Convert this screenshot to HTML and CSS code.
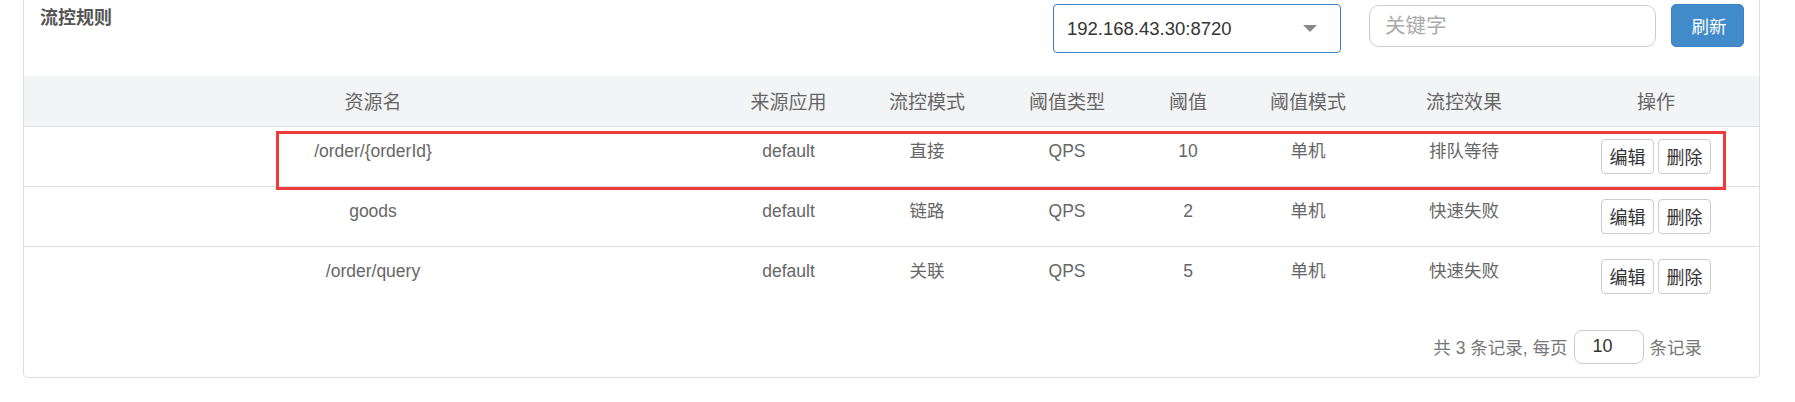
FILE: index.html
```html
<!DOCTYPE html>
<html lang="zh-CN">

<head>
    <meta charset="UTF-8">
    <meta name="viewport" content="width=device-width, initial-scale=1.0">
    <title>流控规则</title>
    <link rel="stylesheet" href="styles.css">
</head>

<body>
    <div class="page">
        <div class="card">
            <div class="toolbar">
                <h3 class="card-title">流控规则</h3>
                <div class="tools">
                    <div class="select-box">
                        <span>192.168.43.30:8720</span>
                        <i class="caret"></i>
                    </div>
                    <input type="text" class="search" placeholder="关键字">
                    <button class="btn-refresh">刷新</button>
                </div>
            </div>

            <table class="rules">
                <colgroup>
                    <col style="width: 698px;">
                    <col style="width: 133px;">
                    <col style="width: 144px;">
                    <col style="width: 136px;">
                    <col style="width: 106px;">
                    <col style="width: 134px;">
                    <col style="width: 178px;">
                    <col style="width: 206px;">
                </colgroup>
                <thead>
                    <tr>
                        <th>资源名</th>
                        <th>来源应用</th>
                        <th>流控模式</th>
                        <th>阈值类型</th>
                        <th>阈值</th>
                        <th>阈值模式</th>
                        <th>流控效果</th>
                        <th>操作</th>
                    </tr>
                </thead>
                <tbody>
                    <tr>
                        <td>/order/{orderId}</td>
                        <td>default</td>
                        <td>直接</td>
                        <td>QPS</td>
                        <td>10</td>
                        <td>单机</td>
                        <td>排队等待</td>
                        <td class="ops"><div><button>编辑</button><button>删除</button></div></td>
                    </tr>
                    <tr>
                        <td>goods</td>
                        <td>default</td>
                        <td>链路</td>
                        <td>QPS</td>
                        <td>2</td>
                        <td>单机</td>
                        <td>快速失败</td>
                        <td class="ops"><div><button>编辑</button><button>删除</button></div></td>
                    </tr>
                    <tr>
                        <td>/order/query</td>
                        <td>default</td>
                        <td>关联</td>
                        <td>QPS</td>
                        <td>5</td>
                        <td>单机</td>
                        <td>快速失败</td>
                        <td class="ops"><div><button>编辑</button><button>删除</button></div></td>
                    </tr>
                </tbody>
            </table>

            <div class="pager">
                <span>共 3 条记录, 每页</span>
                <input type="text" class="page-size" value="10">
                <span>条记录</span>
            </div>
        </div>

        <!-- 标注框 -->
        <div class="mark"></div>
    </div>
</body>

</html>
```

FILE: styles.css
```css
* {
    box-sizing: border-box;
}

body {
    margin: 0;
    background: #fff;
    font-family: "Liberation Sans", "Noto Sans CJK SC", sans-serif;
    color: #666;
}

.page {
    position: relative;
    padding-left: 23px;
}

.card {
    width: 1737px;
    border: 1px solid #ddd;
    border-top: none;
    border-radius: 0 0 5px 5px;
    padding-bottom: 13px;
}

.toolbar {
    height: 76px;
    display: flex;
    justify-content: space-between;
}

.card-title {
    margin: 6px 0 0 16px;
    font-size: 18px;
    line-height: 24px;
    font-weight: bold;
    color: #555;
}

.tools {
    display: flex;
    align-items: flex-start;
    padding-right: 15px;
}

.select-box {
    width: 288px;
    height: 49px;
    margin-top: 4px;
    border: 1px solid #3d7fc4;
    border-radius: 4px;
    padding: 0 23px 0 13px;
    display: flex;
    align-items: center;
    justify-content: space-between;
    font-size: 18.5px;
    color: #333;
}

.select-box .caret {
    width: 0;
    height: 0;
    border-left: 7px solid transparent;
    border-right: 7px solid transparent;
    border-top: 7px solid #888;
}

.search {
    width: 287px;
    height: 42px;
    margin: 5px 0 0 28px;
    border: 1px solid #ccc;
    border-radius: 10px;
    padding: 0 15px;
    font-family: inherit;
    font-size: 20.5px;
    color: #333;
    outline: none;
}

.search::placeholder {
    color: #aaa;
}

.btn-refresh {
    width: 73px;
    height: 43px;
    margin: 4px 0 0 15px;
    border: 1px solid #3b82c4;
    border-radius: 5px;
    background: #428bca;
    color: #fff;
    font-family: inherit;
    font-size: 17.5px;
    padding: 0 0 0 3px;
}

.rules {
    width: 1735px;
    table-layout: fixed;
    border-collapse: collapse;
}

.rules th {
    height: 50px;
    background: #f3f4f5;
    border-bottom: 1px solid #ddd;
    font-size: 19px;
    font-weight: normal;
    color: #666;
    text-align: center;
    vertical-align: middle;
    padding: 0;
}

.rules td {
    padding: 12px 0;
    font-size: 17.5px;
    line-height: 25px;
    text-align: center;
    vertical-align: top;
    color: #666;
}

.rules tbody tr + tr td {
    border-top: 1px solid #ddd;
}

.rules .ops div {
    display: flex;
    justify-content: center;
    gap: 4px;
}

.rules .ops button {
    width: 53px;
    height: 35px;
    border: 1px solid #ccc;
    border-radius: 4px;
    background: #fff;
    color: #333;
    font-family: inherit;
    font-size: 18px;
    padding: 0;
}

.pager {
    margin-top: 24px;
    padding-right: 57px;
    display: flex;
    justify-content: flex-end;
    align-items: center;
    gap: 6px;
    font-size: 17.5px;
    color: #777;
}

.pager .page-size {
    width: 70px;
    height: 34px;
    border: 1px solid #ccc;
    border-radius: 8px;
    padding: 0 0 0 18px;
    font-family: inherit;
    font-size: 18px;
    color: #333;
}

.mark {
    position: absolute;
    left: 276px;
    top: 131px;
    width: 1450px;
    height: 59px;
    border: 3px solid #ee3a3a;
}
```
